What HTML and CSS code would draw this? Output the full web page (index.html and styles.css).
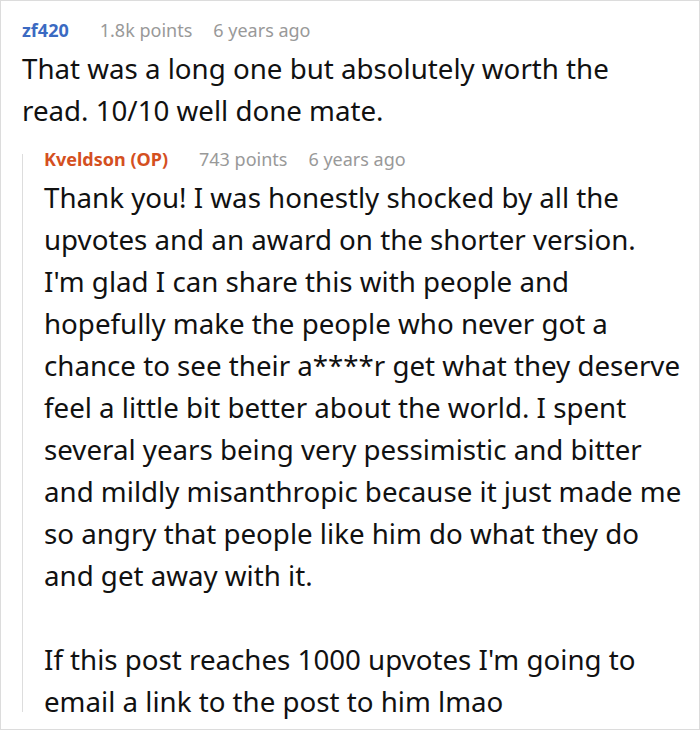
FILE: index.html
```html
<!DOCTYPE html>
<html>
<head>
<meta charset="utf-8">
<link rel="stylesheet" href="styles.css">
</head>
<body>
<div class="frame">
  <div class="comment">
    <div class="meta">
      <span class="author">zf420</span>
      <span class="info">1.8k points</span>
      <span class="info">6 years ago</span>
    </div>
    <div class="body">
      <p>That was a long one but absolutely worth the<br>read. 10/10 well done mate.</p>
    </div>
    <div class="reply">
      <div class="meta">
        <span class="author op">Kveldson (OP)</span>
        <span class="info">743 points</span>
        <span class="info">6 years ago</span>
      </div>
      <div class="body">
        <p>Thank you! I was honestly shocked by all the<br>upvotes and an award on the shorter version.<br>I'm glad I can share this with people and<br>hopefully make the people who never got a<br>chance to see their a****r get what they deserve<br>feel a little bit better about the world. I spent<br>several years being very pessimistic and bitter<br>and mildly misanthropic because it just made me<br>so angry that people like him do what they do<br>and get away with it.</p>
        <p class="last">If this post reaches 1000 upvotes I'm going to<br>email a link to the post to him lmao</p>
      </div>
    </div>
  </div>
</div>
</body>
</html>
```
FILE: styles.css
```css
html, body {
  margin: 0;
  padding: 0;
  background: #fff;
}
.frame {
  width: 698px;
  height: 728px;
  border: 1px solid #dcdcdc;
  overflow: hidden;
  font-family: "Noto Sans", "Open Sans", sans-serif;
  color: #111;
}
.comment {
  padding: 12px 8px 0 21px;
}
.meta {
  display: flex;
  gap: 21px;
  font-size: 18px;
  line-height: 34px;
}
.author {
  font-weight: bold;
  color: #3b6ac2;
  margin-right: 10px;
}
.author.op {
  color: #d4501f;
}
.info {
  color: #999;
}
.body {
  font-size: 27.7px;
  line-height: 42px;
  white-space: nowrap;
}
.body p {
  margin: 0;
}
.body p.last {
  margin-top: 42px;
}
.reply {
  position: relative;
  margin-top: 11px;
  padding-left: 22px;
}
.reply::before {
  content: "";
  position: absolute;
  left: 0;
  top: 12px;
  bottom: 10px;
  width: 1px;
  background: #ddd;
}
```
